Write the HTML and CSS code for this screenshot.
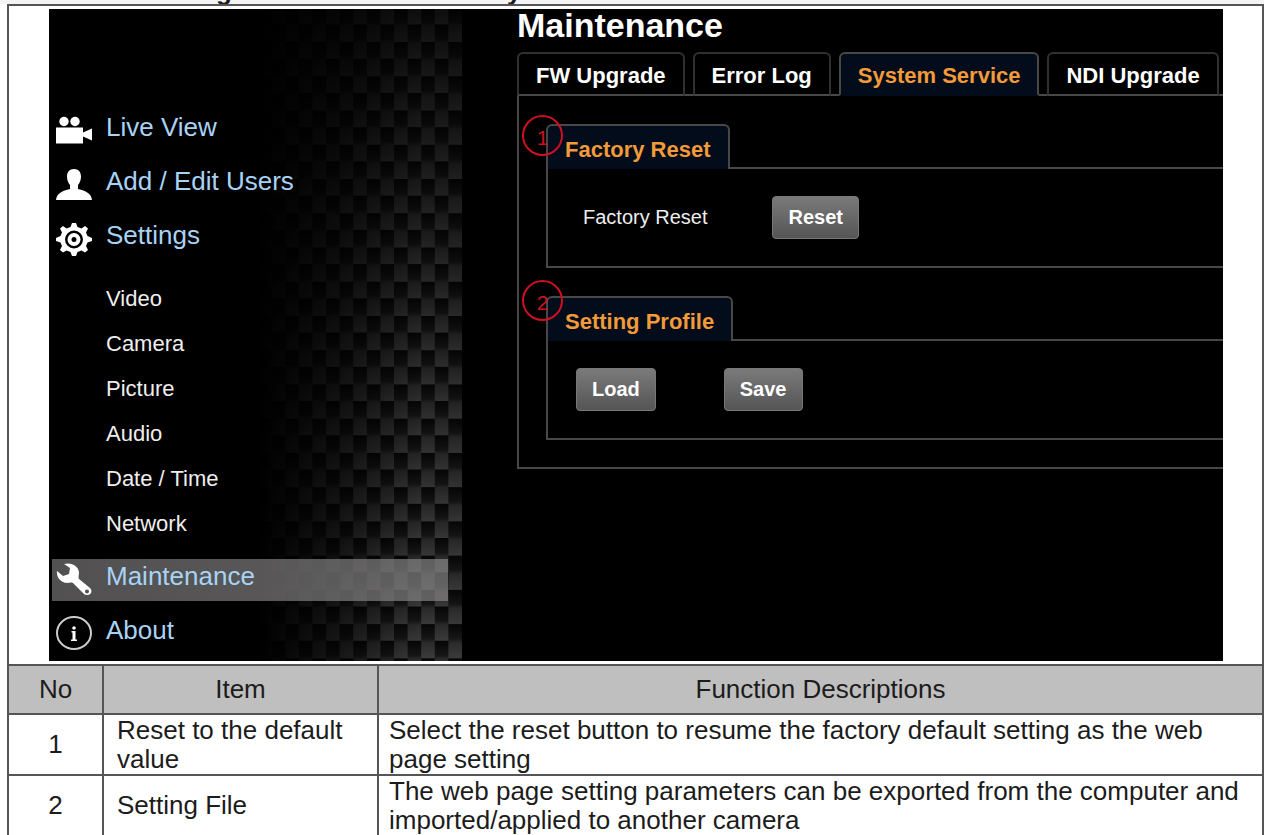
FILE: index.html
```html
<!DOCTYPE html>
<html lang="en">
<head>
<meta charset="utf-8">
<title>Maintenance - System Service</title>
<link rel="stylesheet" href="styles.css">
</head>
<body>
<div class="heading"><span>g</span><span>y</span></div>
<table class="manual">
  <colgroup><col class="col-no"><col class="col-item"><col></colgroup>
  <tbody>
  <tr>
    <td class="figure-cell" colspan="3">
      <div class="figure">
        <nav class="sidebar">
          <svg class="weave" aria-hidden="true">
            <defs>
              <linearGradient id="cell" x1="0" y1="0" x2="0" y2="1">
                <stop offset="0" stop-color="#060606"/>
                <stop offset=".42" stop-color="#161616"/>
                <stop offset=".54" stop-color="#2b2b2b"/>
                <stop offset="1" stop-color="#3b3b3b"/>
              </linearGradient>
              <pattern id="weave" width="27.2" height="34.24" y="-1.2" patternUnits="userSpaceOnUse">
                <rect width="13.6" height="34.24" fill="url(#cell)"/>
                <rect x="13.6" y="-17.5" width="13.6" height="34.24" fill="url(#cell)"/>
                <rect x="13.6" y="16.74" width="13.6" height="34.24" fill="url(#cell)"/>
              </pattern>
              <linearGradient id="fadeX"><stop offset="0" stop-color="#000"/><stop offset=".4" stop-color="#000" stop-opacity=".6"/><stop offset=".8" stop-color="#000" stop-opacity="0"/></linearGradient>
              <linearGradient id="fadeY" x1="0" y1="0" x2="0" y2="1"><stop offset="0" stop-color="#000" stop-opacity=".68"/><stop offset=".6" stop-color="#000" stop-opacity=".2"/><stop offset="1" stop-color="#000" stop-opacity="0"/></linearGradient>
            </defs>
            <rect width="100%" height="100%" fill="url(#weave)"/>
            <rect width="100%" height="100%" fill="url(#fadeX)"/>
            <rect width="100%" height="100%" fill="url(#fadeY)"/>
          </svg>
          <ul class="menu">
            <li><a class="item" href="#live">
              <svg class="icon" viewBox="0 0 36 36"><circle cx="8" cy="8.500" r="4.700"/><circle cx="19" cy="8.500" r="4.700"/><path d="M0 14.500h27v5l9-4v12l-9-4v7H0z"/></svg>
              <span>Live View</span></a></li>
            <li><a class="item" href="#users">
              <svg class="icon" viewBox="0 0 36 36"><path d="M18 2c4.500 0 7 3 7 7.500 0 4-1.500 6.500-3 8.500v4c8 2 13 4 14 11H0c1-7 6-9 14-11v-4c-1.500-2-3-4.500-3-8.500C11 5 13.500 2 18 2z"/></svg>
              <span>Add / Edit Users</span></a></li>
            <li><a class="item" href="#settings">
              <svg class="icon" viewBox="0 0 36 36"><path fill-rule="evenodd" d="M16 2h4l1.500 4 4 1.500L29 5l3 2.500-2 4 1.500 3.500 4.500 2v3l-4.500 1.500L30 25l2 4-3 2.500-3.500-2-4 1.500L20 35h-4l-1.500-4-4-1.500-3.500 2L4 29l2-4-1.500-3.500L0 20v-3l4.500-2L6 11.500l-2-4L7 5l3.500 2.500 4-1.500zM18 9.500a9 9 0 1 0 0 18 9 9 0 1 0 0-18z"/><circle class="ring" cx="18" cy="18.500" r="4.500"/></svg>
              <span>Settings</span></a></li>
          </ul>
          <ul class="submenu">
            <li><a href="#video">Video</a></li>
            <li><a href="#camera">Camera</a></li>
            <li><a href="#picture">Picture</a></li>
            <li><a href="#audio">Audio</a></li>
            <li><a href="#date">Date / Time</a></li>
            <li><a href="#network">Network</a></li>
          </ul>
          <ul class="menu-end">
            <li><a class="item current" href="#maintenance">
              <svg class="icon" viewBox="0 0 36 36"><path fill-rule="evenodd" d="M8 2c8-2 14 2 15 8 0 3-1 5 0 7l11 9c3 3 1 7-3 7-2 0-3-1-4-2l-10-10c-2-1-4 0-6 0C5 21 0 15 1 9l6 5 6-2 1-6zM31 27.500a2 2 0 1 0 0 4 2 2 0 1 0 0-4z"/></svg>
              <span>Maintenance</span></a></li>
            <li><a class="item" href="#about">
              <svg class="icon" viewBox="0 0 36 36"><ellipse class="info" cx="18" cy="17" rx="17" ry="16"/><circle cx="18" cy="12" r="1.800"/><path d="M15.500 15h4v8.500h1.500V25h-6v-1.500h1.500v-7h-1z"/></svg>
              <span>About</span></a></li>
          </ul>
        </nav>
        <div class="main">
          <h1>Maintenance</h1>
          <div class="tabs">
            <button class="tab" type="button">FW Upgrade</button>
            <button class="tab" type="button">Error Log</button>
            <button class="tab selected" type="button">System Service</button>
            <button class="tab" type="button">NDI Upgrade</button>
          </div>
          <div class="panel">
            <section class="group">
              <span class="badge">1</span>
              <h2>Factory Reset</h2>
              <div class="box reset-box"><label for="reset">Factory Reset</label><button class="btn" id="reset" type="button">Reset</button></div>
            </section>
            <section class="group">
              <span class="badge raised">2</span>
              <h2>Setting Profile</h2>
              <div class="box profile-box"><button class="btn" type="button">Load</button><button class="btn" type="button">Save</button></div>
            </section>
          </div>
        </div>
      </div>
    </td>
  </tr>
  <tr class="head"><th>No</th><th>Item</th><th>Function Descriptions</th></tr>
  <tr class="row"><td class="no">1</td><td class="name">Reset to the default value</td><td>Select the reset button to resume the factory default setting as the web page setting</td></tr>
  <tr class="row"><td class="no">2</td><td class="name">Setting File</td><td>The web page setting parameters can be exported from the computer and imported/applied to another camera</td></tr>
  </tbody>
</table>
</body>
</html>
```
FILE: styles.css
```css
* { box-sizing: border-box; }
body {
  margin: 0;
  background: #fff;
  color: #1c1c1c;
  font-family: "Liberation Sans", Arial, sans-serif;
  overflow: hidden;
}
ul { list-style: none; margin: 0; padding: 0; }
a { text-decoration: none; color: inherit; }
button { font-family: inherit; }

.heading {
  display: flex;
  align-items: flex-end;
  gap: 275px;
  height: 4px;
  padding-left: 216px;
  overflow: hidden;
  font-size: 26px;
  font-weight: bold;
  line-height: 26px;
  background: #f4f4f4;
}

.manual {
  width: calc(100% - 7px);
  margin-left: 7px;
  border-collapse: collapse;
  table-layout: fixed;
  font-size: 26px;
  line-height: 29px;
}
.manual td, .manual th { border: 2px solid #555; padding: 0 10px; }
.col-no { width: 95px; }
.col-item { width: 275px; }
.manual .figure-cell { padding: 3px 39px 3px 40px; }
.head th { height: 49px; background: #bfbfbf; font-weight: normal; }
.row td { height: 61px; }
.row .no { text-align: center; }
.row .name { padding: 0 10px 0 13px; }

.figure { display: flex; background: #000; color: #eee; overflow: hidden; }

.sidebar { position: relative; flex: 0 0 413px; padding: 91px 0 6px; }
.weave { position: absolute; top: 0; right: 0; width: 204px; height: 100%; }
.menu, .submenu, .menu-end { position: relative; }
.item {
  display: flex;
  align-items: center;
  gap: 14px;
  height: 42px;
  margin: 0 14px 12px 3px;
  padding-left: 4px;
  color: #a9d3f5;
  font-size: 26px;
  line-height: 30px;
}
.item span { padding-bottom: 8px; }
.menu-end li:last-child .item { margin-bottom: 0; }
.icon { width: 36px; height: 36px; flex: none; fill: #fff; }
.ring { fill: none; stroke: #fff; stroke-width: 4; }
.info { fill: none; stroke: #ccc; stroke-width: 2; }
.menu { padding-top: 10px; }
.submenu { padding: 4px 0 13px 57px; font-size: 22px; line-height: 45px; }
.current { background: linear-gradient(90deg, rgba(105, 103, 103, .78), rgba(138, 136, 136, .68)); }

.main { flex: 1; min-width: 0; padding-left: 55px; }
h1 { margin: 0; font-size: 34px; line-height: 32px; color: #fff; }
.tabs { display: flex; gap: 8px; margin-top: 11px; }
.tab {
  height: 44px;
  padding: 4px 17px 0;
  border: 2px solid #303030;
  border-bottom-color: #484848;
  border-radius: 6px 6px 0 0;
  background: #000;
  color: #fff;
  font-size: 22px;
  font-weight: bold;
  white-space: nowrap;
}
.tabs .selected { border-color: #484848; border-bottom-color: #020c1a; background: #020c1a; color: #f39a3a; }
.panel { margin-top: -2px; padding: 28px 0 27px 27px; border: 2px solid #484848; border-right: 0; }
.group { position: relative; }
.group + .group { margin-top: 28px; }
h2 {
  position: relative;
  z-index: 1;
  width: max-content;
  height: 45px;
  margin: 0;
  padding: 5px 17px 0;
  border: 2px solid #484848;
  border-bottom: 0;
  border-radius: 6px 6px 0 0;
  background: #020c1a;
  color: #f39a3a;
  font-size: 22px;
  line-height: 38px;
}
.box { display: flex; align-items: center; height: 101px; margin-top: -2px; border: 2px solid #484848; border-right: 0; font-size: 20px; }
.reset-box { gap: 65px; padding-left: 35px; }
.profile-box { gap: 68px; padding-left: 28px; }
.btn {
  height: 43px;
  padding: 0 15px;
  border: 1px solid #777;
  border-radius: 4px;
  background: linear-gradient(#7a7a7a, #555);
  color: #fff;
  font-size: 20px;
  font-weight: bold;
}
.badge {
  position: absolute;
  z-index: 2;
  top: -9px;
  left: -24px;
  width: 41px;
  height: 41px;
  border: 2px solid #cf1022;
  border-radius: 50%;
  color: #cf1022;
  font-size: 21px;
  line-height: 41px;
  text-align: center;
}
.raised { top: -16px; }
```
